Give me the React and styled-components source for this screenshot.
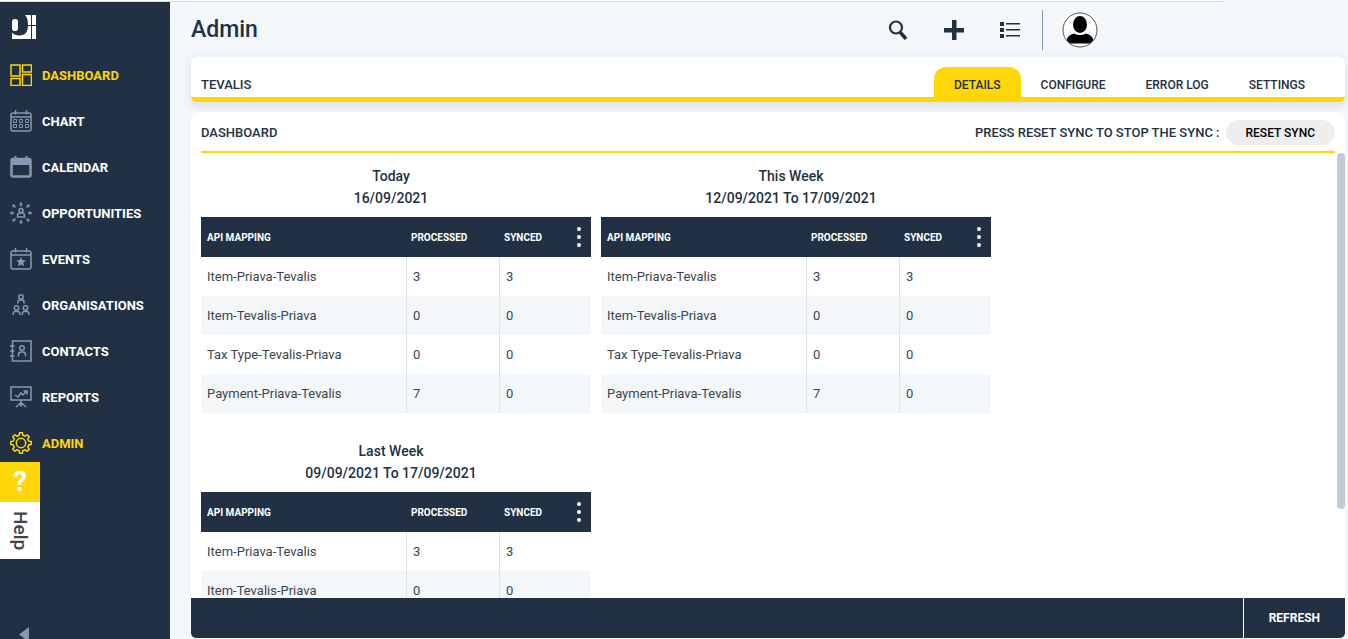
import { useState } from "react";
import styled, { createGlobalStyle } from "styled-components";

const GlobalStyle = createGlobalStyle`
	*, *::before, *::after {
		box-sizing: border-box;
	}

	body {
		margin: 0;
		font-family: Roboto, "Liberation Sans", sans-serif;
		color: #213143;
		background-color: #f3f7fa;
	}

	button {
		font-family: inherit;
		border: none;
		padding: 0;
		background: none;
		cursor: pointer;
	}
`;

const Page = styled.div`
	display: flex;
	flex-direction: column;
	height: 100vh;
	overflow: hidden;
`;

const TopLine = styled.div`
	flex: none;
	height: 2px;
	margin-right: 123px;
	background-color: #fff;
	border-bottom: 1px solid #d9dbdd;
`;

const Shell = styled.div`
	flex: 1;
	display: flex;
	min-height: 0;
`;

const Sidebar = styled.aside`
	position: relative;
	flex: none;
	display: flex;
	flex-direction: column;
	width: 170px;
	overflow: hidden;
	background-color: #213143;
`;

const LogoLink = styled.a`
	flex: none;
	display: flex;
	align-items: center;
	height: 50px;
	padding-left: 12px;
`;

const NavLink = styled.a`
	display: flex;
	align-items: center;
	gap: 10px;
	height: 46px;
	padding-left: 10px;
	font-size: 13px;
	font-weight: 700;
	text-decoration: none;
	text-transform: uppercase;
	color: ${(props) => (props.$active ? "#ffd608" : "#fff")};

	svg {
		flex: none;
		color: ${(props) => (props.$active ? "#ffd608" : "#8499b1")};
	}
`;

const HelpButton = styled.button`
	position: absolute;
	left: 0;
	bottom: 80px;
	display: flex;
	flex-direction: column;
	width: 40px;
	background-color: #fff;
`;

const HelpMark = styled.span`
	width: 40px;
	height: 40px;
	font-size: 28px;
	font-weight: 700;
	line-height: 40px;
	text-align: center;
	color: #fff;
	background-color: #ffd608;
`;

const HelpLabel = styled.span`
	width: 40px;
	height: 57px;
	font-size: 19px;
	font-weight: 500;
	line-height: 40px;
	text-align: center;
	writing-mode: vertical-rl;
	color: #444;
`;

const CollapseButton = styled.button`
	flex: none;
	width: 10px;
	height: 12px;
	margin: auto 0 0 19px;

	svg {
		display: block;
	}
`;

const Main = styled.main`
	flex: 1;
	display: flex;
	flex-direction: column;
	min-width: 0;
	padding: 0 3px 1px 21px;
`;

const Header = styled.header`
	flex: none;
	display: flex;
	align-items: center;
	justify-content: space-between;
	height: 55px;
	padding-right: 247px;
`;

const Title = styled.h1`
	margin: 0;
	font-size: 23px;
	font-weight: 500;
	line-height: 55px;
`;

const HeaderActions = styled.div`
	display: flex;
	align-items: center;
`;

const IconButton = styled.button`
	display: flex;
	align-items: center;
	justify-content: center;
	width: 56px;
	height: 40px;
	color: #213143;
`;

const Divider = styled.span`
	width: 1px;
	height: 40px;
	margin: 0 19px 0 4px;
	background-color: #8499b1;
`;

const Avatar = styled.button`
	width: 36px;
	height: 36px;

	svg {
		display: block;
	}
`;

const TabCard = styled.section`
	flex: none;
	display: flex;
	align-items: flex-end;
	justify-content: space-between;
	height: 45px;
	padding: 0 20px 0 10px;
	border-bottom: 5px solid #ffd608;
	border-radius: 6px;
	background-color: #fff;
	box-shadow: 0 4px 12px rgba(33, 49, 67, 0.12);
`;

const SectionName = styled.h2`
	margin: 0;
	font-size: 13px;
	font-weight: 500;
	line-height: 24px;
	text-transform: uppercase;
`;

const Tabs = styled.div`
	display: flex;
`;

const Tab = styled.button`
	height: 30px;
	padding: 5px 20px 0;
	border-radius: 12px 12px 0 0;
	font-size: 12px;
	font-weight: 500;
	text-transform: uppercase;
	color: #213143;
	background-color: ${(props) => (props.$active ? "#ffd608" : "transparent")};
`;

const Panel = styled.section`
	flex: 1;
	display: flex;
	flex-direction: column;
	min-height: 0;
	margin-top: 10px;
	border-radius: 6px 6px 0 0;
	background-color: #fff;
`;

const PanelHeader = styled.div`
	flex: none;
	display: flex;
	align-items: center;
	justify-content: space-between;
	height: 41px;
	margin: 0 10px;
	padding-top: 2px;
	border-bottom: 2px solid #ffd608;
`;

const SyncNote = styled.div`
	display: flex;
	align-items: center;
	gap: 6px;
	font-size: 13px;
	font-weight: 500;
	text-transform: uppercase;
`;

const PillButton = styled.button`
	height: 25px;
	padding: 0 20px;
	border-radius: 13px;
	font-size: 12px;
	font-weight: 500;
	text-transform: uppercase;
	color: #000;
	background-color: #eee;
`;

const PanelBody = styled.div`
	flex: 1;
	display: flex;
	min-height: 0;
`;

const Reports = styled.div`
	flex: 1;
	display: flex;
	flex-wrap: wrap;
	align-content: flex-start;
	gap: 15px 10px;
	padding: 0 0 12px 10px;
	overflow-y: auto;
	scrollbar-width: none;
`;

const ScrollTrack = styled.div`
	flex: none;
	width: 8px;
`;

const ScrollThumb = styled.div`
	width: 8px;
	height: 80%;
	border-radius: 4px;
	background-color: #c1cbd1;
`;

const Report = styled.article`
	width: 390px;
	padding-top: 12px;
`;

const ReportTitle = styled.h3`
	margin: 0 0 8px;
	padding-right: 10px;
	font-size: 14px;
	font-weight: 500;
	line-height: 22px;
	text-align: center;
`;

const Table = styled.table`
	width: 100%;
	table-layout: fixed;
	border-collapse: separate;
	border-spacing: 0;
`;

const HeadCell = styled.th`
	width: ${(props) => props.$width};
	height: 40px;
	padding: 0 6px;
	font-size: 10px;
	font-weight: 700;
	text-align: left;
	text-transform: uppercase;
	color: #fff;
	background-color: #213143;

	&:not(:first-child) {
		padding-left: 5px;
	}
`;

const HeadInner = styled.div`
	display: flex;
	align-items: center;
	justify-content: space-between;
`;

const MenuButton = styled.button`
	display: flex;
	flex-direction: column;
	align-items: center;
	justify-content: space-between;
	width: 12px;
	height: 20px;
`;

const Dot = styled.span`
	width: 4px;
	height: 4px;
	border-radius: 50%;
	background-color: #fff;
`;

const Row = styled.tr`
	&:nth-child(even) {
		background-color: #f3f7fa;
	}
`;

const Cell = styled.td`
	height: 39px;
	padding: 0 6px;
	font-size: 13px;
	color: #3c444d;

	&:not(:first-child) {
		border-left: 1px solid #dfe3e7;
	}
`;

const Footer = styled.footer`
	flex: none;
	display: flex;
	justify-content: flex-end;
	height: 40px;
	border-radius: 0 0 5px 5px;
	background-color: #213143;
`;

const RefreshButton = styled.button`
	padding: 0 25px;
	border-left: 1px solid #fff;
	font-size: 12px;
	font-weight: 700;
	text-transform: uppercase;
	color: #fff;
`;

// Outline of an eight-toothed wheel centred in the 22px icon box
function gearPath() {
	const points = [];
	for (let tooth = 0; tooth < 8; tooth++) {
		const middle = tooth * 45;
		[
			[-13, 8],
			[-8, 10.3],
			[8, 10.3],
			[13, 8],
		].forEach(([offset, radius]) => {
			const angle = ((middle + offset) * Math.PI) / 180;
			const x = 11 + radius * Math.sin(angle);
			const y = 11 - radius * Math.cos(angle);
			points.push(`${x.toFixed(2)} ${y.toFixed(2)}`);
		});
	}
	return `M${points.join("L")}z`;
}

const icons = {
	dashboard: <path d="M1 1h9v11H1zM12.500 1h9v7h-9zM1 14.500h9v7H1zM12.500 10.500h9v11h-9z" />,
	chart: (
		<>
			<rect x="1" y="3" width="20" height="18" rx="2" />
			<path d="M1 7h20M5.500 0v4.500M16.500 0v4.500" />
			<path
				strokeWidth="1"
				d="M3.500 9.500h3v3h-3zM9.500 9.500h3v3h-3zM15.500 9.500h3v3h-3zM3.500 14.500h3v3h-3zM9.500 14.500h3v3h-3zM15.500 14.500h3v3h-3z"
			/>
		</>
	),
	calendar: (
		<>
			<rect x="1.500" y="3" width="19" height="17.500" rx="1.500" strokeWidth="2.500" />
			<path d="M1 3h20v6H1z" fill="currentColor" stroke="none" />
			<path d="M5.500 0v4M16.500 0v4" strokeWidth="2" />
		</>
	),
	opportunities: (
		<>
			<circle cx="11" cy="8.500" r="2" />
			<path d="M7.500 15v-1.500a2.500 2.500 0 0 1 2.500-2.500h2a2.500 2.500 0 0 1 2.500 2.500V15z" />
			<path d="M11 4.500V1M11 21.500V18M4 11H0.500M21.500 11H18M5.500 5.500L3.500 3.500M16.500 5.500l2-2M5.500 16.500l-2 2M16.500 16.500l2 2" />
			<path
				fill="currentColor"
				stroke="none"
				d="M11 0l2 2.500H9zM11 22l2-2.500H9zM0 11l2.500-2v4zM22 11l-2.500-2v4zM2.500 2.500h3l-3 3zM19.500 2.500v3l-3-3zM2.500 19.500v-3l3 3zM19.500 19.500h-3l3-3z"
			/>
		</>
	),
	events: (
		<>
			<rect x="1" y="3" width="20" height="18" rx="2" />
			<path d="M1 7h20M5.500 0v4.500M16.500 0v4.500" />
			<path
				fill="currentColor"
				stroke="none"
				d="M11 9l1.400 3.100 3.400.4-2.500 2.300.7 3.400-3-1.700-3 1.700.7-3.400-2.500-2.300 3.400-.4z"
			/>
		</>
	),
	organisations: (
		<>
			<circle cx="11" cy="3" r="2.200" />
			<path d="M8 9.500V8a2 2 0 0 1 2-2h2a2 2 0 0 1 2 2v1.500" />
			<circle cx="6.500" cy="14" r="2.200" />
			<path d="M3.200 21v-1.500a2 2 0 0 1 2-2h2.500a2 2 0 0 1 2 2V21" />
			<circle cx="15.500" cy="14" r="2.200" />
			<path d="M12.300 21v-1.500a2 2 0 0 1 2-2h2.500a2 2 0 0 1 2 2V21" />
		</>
	),
	contacts: (
		<>
			<path d="M2.500 1h18.500v20H2.500zM0 6h4.500M0 11h4.500M0 16h4.500" />
			<circle cx="12" cy="8" r="2.300" />
			<path d="M8.500 16.500v-2a2.500 2.500 0 0 1 2.500-2.500h2a2.500 2.500 0 0 1 2.500 2.500v2" />
		</>
	),
	reports: (
		<>
			<path d="M1 1h20v13H1z" />
			<path d="M11 14v7M11 16.500L6 21M11 16.500L16 21M5 9l3 2 3-4 2 2 3.500-4M13.500 5H17v3.500" />
		</>
	),
	admin: (
		<>
			<circle cx="11" cy="11" r="4.700" />
			<path strokeLinejoin="round" d={gearPath()} />
		</>
	),
};

const navItems = [
	{ id: "dashboard", label: "Dashboard", active: true },
	{ id: "chart", label: "Chart" },
	{ id: "calendar", label: "Calendar" },
	{ id: "opportunities", label: "Opportunities" },
	{ id: "events", label: "Events" },
	{ id: "organisations", label: "Organisations" },
	{ id: "contacts", label: "Contacts" },
	{ id: "reports", label: "Reports" },
	{ id: "admin", label: "Admin", active: true },
];

const tabs = ["Details", "Configure", "Error Log", "Settings"];

const mappings = [
	{ name: "Item-Priava-Tevalis", processed: 3, synced: 3 },
	{ name: "Item-Tevalis-Priava", processed: 0, synced: 0 },
	{ name: "Tax Type-Tevalis-Priava", processed: 0, synced: 0 },
	{ name: "Payment-Priava-Tevalis", processed: 7, synced: 0 },
];

const reports = [
	{ title: "Today", range: "16/09/2021", rows: mappings },
	{ title: "This Week", range: "12/09/2021 To 17/09/2021", rows: mappings },
	{ title: "Last Week", range: "09/09/2021 To 17/09/2021", rows: mappings },
];

function NavIcon({ name }) {
	return (
		<svg
			width="22"
			height="22"
			viewBox="0 0 22 22"
			fill="none"
			stroke="currentColor"
			strokeWidth="1.500"
			aria-hidden="true"
		>
			{icons[name]}
		</svg>
	);
}

function Logo() {
	return (
		<svg width="24" height="24" viewBox="0 0 24 24" aria-hidden="true">
			<path fill="#fff" d="M0 0h24v24H0z" />
			<path
				fill="#213143"
				d="M0 0h13c2 2 3 5 3 10 0 7-3 10.500-8.500 10.500-3.500 0-6-1-7.500-3z"
			/>
			<rect x="0" y="4" width="6" height="12" rx="2.800" fill="#fff" />
			<path stroke="#213143" d="M19.500 0v24M15 10.500h9" />
		</svg>
	);
}

function ReportTable({ report }) {
	return (
		<Report>
			<ReportTitle>
				{report.title}
				<br />
				{report.range}
			</ReportTitle>
			<Table>
				<thead>
					<tr>
						<HeadCell $width="205px">API Mapping</HeadCell>
						<HeadCell $width="93px">Processed</HeadCell>
						<HeadCell>
							<HeadInner>
								Synced
								<MenuButton aria-label="Table menu">
									<Dot />
									<Dot />
									<Dot />
								</MenuButton>
							</HeadInner>
						</HeadCell>
					</tr>
				</thead>
				<tbody>
					{report.rows.map((row) => (
						<Row key={row.name}>
							<Cell>{row.name}</Cell>
							<Cell>{row.processed}</Cell>
							<Cell>{row.synced}</Cell>
						</Row>
					))}
				</tbody>
			</Table>
		</Report>
	);
}

function App() {
	const [activeTab, setActiveTab] = useState("Details");

	return (
		<>
			<GlobalStyle />
			<Page>
				<TopLine />
				<Shell>
					<Sidebar>
						<LogoLink href="#home" aria-label="Home">
							<Logo />
						</LogoLink>
						<nav>
							{navItems.map((item) => (
								<NavLink key={item.id} href={`#${item.id}`} $active={item.active}>
									<NavIcon name={item.id} />
									{item.label}
								</NavLink>
							))}
						</nav>
						<CollapseButton aria-label="Collapse menu">
							<svg width="10" height="15" viewBox="0 0 10 15">
								<path fill="#8499b1" d="M10 0v15L0 7.500z" />
							</svg>
						</CollapseButton>
						<HelpButton>
							<HelpMark>?</HelpMark>
							<HelpLabel>Help</HelpLabel>
						</HelpButton>
					</Sidebar>
					<Main>
						<Header>
							<Title>Admin</Title>
							<HeaderActions>
								<IconButton aria-label="Search">
									<svg width="20" height="20" viewBox="0 0 20 20" fill="none" stroke="currentColor">
										<circle cx="8" cy="7.500" r="6" strokeWidth="2.200" />
										<path d="M12 12l6 7" strokeWidth="3.500" />
									</svg>
								</IconButton>
								<IconButton aria-label="Add">
									<svg width="20" height="20" viewBox="0 0 20 20">
										<path fill="currentColor" d="M8 0h4.500v8H20v4.500h-7.500V20H8v-7.500H0V8h8z" />
									</svg>
								</IconButton>
								<IconButton aria-label="List">
									<svg width="20" height="18" viewBox="0 0 20 18" fill="currentColor">
										<path d="M0 1h4v4H0zM0 7h4v4H0zM0 13h4v4H0zM6 2h14v1.500H6zM6 8h14v1.500H6zM6 14h14v1.500H6z" />
									</svg>
								</IconButton>
								<Divider />
								<Avatar aria-label="Account">
									<svg width="36" height="36" viewBox="0 0 36 36">
										<circle cx="18" cy="18" r="17" fill="#fff" stroke="#555" />
										<ellipse cx="18" cy="12.500" rx="7" ry="8.500" />
										<path d="M4.500 28c1.500-4 4-6 8-6.500 3 2 8 2 11 0 4 .5 6.500 2.500 8 6.500l-4 3.500h-19z" />
									</svg>
								</Avatar>
							</HeaderActions>
						</Header>
						<TabCard>
							<SectionName>Tevalis</SectionName>
							<Tabs role="tablist">
								{tabs.map((tab) => (
									<Tab
										key={tab}
										role="tab"
										aria-selected={tab === activeTab}
										$active={tab === activeTab}
										onClick={() => setActiveTab(tab)}
									>
										{tab}
									</Tab>
								))}
							</Tabs>
						</TabCard>
						<Panel>
							<PanelHeader>
								<SectionName>Dashboard</SectionName>
								<SyncNote>
									Press reset sync to stop the sync :
									<PillButton>Reset Sync</PillButton>
								</SyncNote>
							</PanelHeader>
							<PanelBody>
								<Reports>
									{reports.map((report) => (
										<ReportTable key={report.title} report={report} />
									))}
								</Reports>
								<ScrollTrack>
									<ScrollThumb />
								</ScrollTrack>
							</PanelBody>
						</Panel>
						<Footer>
							<RefreshButton>Refresh</RefreshButton>
						</Footer>
					</Main>
				</Shell>
			</Page>
		</>
	);
}

export default App;
